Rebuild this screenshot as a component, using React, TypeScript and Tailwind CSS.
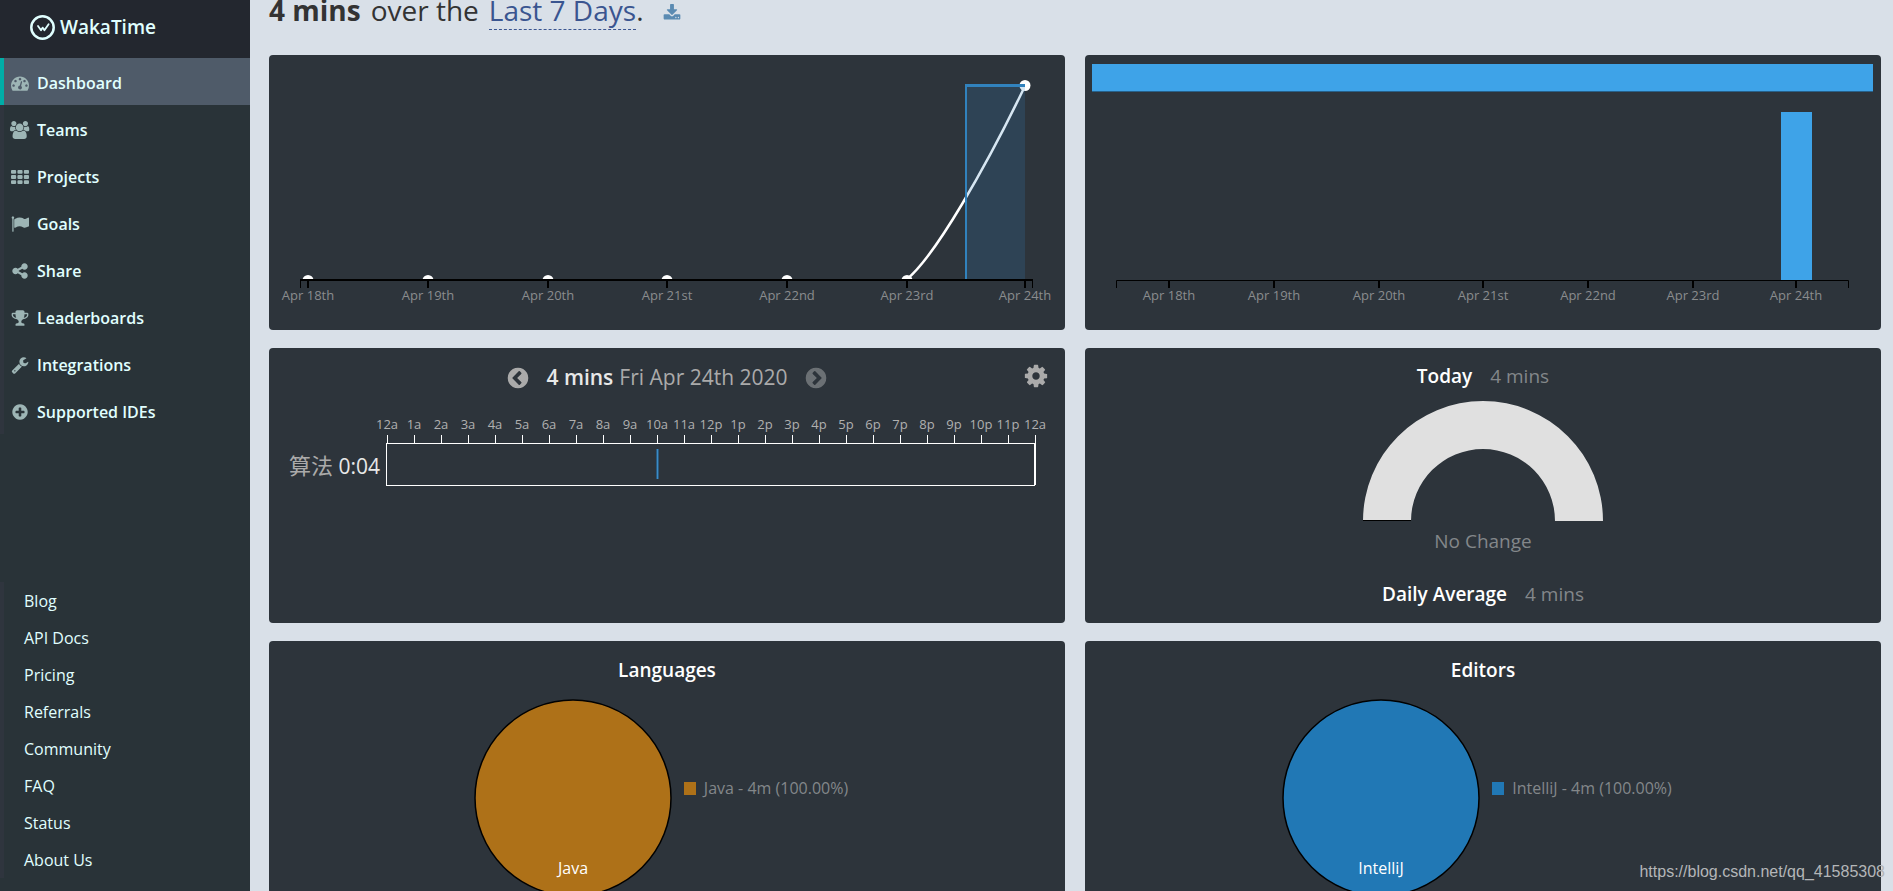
import React from 'react';

type IconDef = { width?: number; path: string };

const icons: Record<string, IconDef> = {
  dashboard: {
    path: 'M384 1152q0-53-37.5-90.5t-90.5-37.5-90.5 37.5-37.5 90.5 37.5 90.5 90.5 37.5 90.5-37.5 37.5-90.5zm192-448q0-53-37.5-90.5t-90.5-37.5-90.5 37.5-37.5 90.5 37.5 90.5 90.5 37.5 90.5-37.5 37.5-90.5zm428 481l101-382q6-26-7.5-48.5t-38.5-29.5-48 6.5-30 39.5l-101 382q-60 5-107 43.5t-63 98.5q-20 77 20 146t117 89 146-20 89-117q16-60-6-117t-72-91zm660-33q0-53-37.5-90.5t-90.5-37.5-90.5 37.5-37.5 90.5 37.5 90.5 90.5 37.5 90.5-37.5 37.5-90.5zm-640-640q0-53-37.5-90.5t-90.5-37.5-90.5 37.5-37.5 90.5 37.5 90.5 90.5 37.5 90.5-37.5 37.5-90.5zm448 192q0-53-37.5-90.5t-90.5-37.5-90.5 37.5-37.5 90.5 37.5 90.5 90.5 37.5 90.5-37.5 37.5-90.5zm320 448q0 261-141 483-19 29-54 29h-1402q-35 0-54-29-141-221-141-483 0-182 71-348t191-286 286-191 348-71 348 71 286 191 191 286 71 348z',
  },
  users: {
    width: 1920,
    path: 'M593 896q-162 5-265 128h-134q-82 0-138-40.5t-56-118.5q0-353 124-353 6 0 43.5 21t97.5 42.5 119 21.5q67 0 133-23-5 37-5 66 0 139 81 256zm1071 637q0 120-73 189.5t-194 69.5h-874q-121 0-194-69.5t-73-189.5q0-53 3.5-103.5t14-109 26.5-108.5 43-97.5 62-81 85.5-53.5 111.5-20q10 0 43 21.5t73 48 107 48 135 21.5 135-21.5 107-48 73-48 43-21.5q61 0 111.5 20t85.5 53.5 62 81 43 97.5 26.5 108.5 14 109 3.5 103.5zm-1024-1277q0 106-75 181t-181 75-181-75-75-181 75-181 181-75 181 75 75 181zm704 384q0 159-112.5 271.5t-271.5 112.5-271.5-112.5-112.5-271.5 112.5-271.5 271.5-112.5 271.5 112.5 112.5 271.5zm576 225q0 78-56 118.5t-138 40.5h-134q-103-123-265-128 81-117 81-256 0-29-5-66 66 23 133 23 59 0 119-21.5t97.5-42.5 43.5-21q124 0 124 353zm-128-609q0 106-75 181t-181 75-181-75-75-181 75-181 181-75 181 75 75 181z',
  },
  grid: {
    path: 'M96 192h320q96 0 96 96v192q0 96-96 96h-320q-96 0-96-96v-192q0-96 96-96zm640 0h320q96 0 96 96v192q0 96-96 96h-320q-96 0-96-96v-192q0-96 96-96zm640 0h320q96 0 96 96v192q0 96-96 96h-320q-96 0-96-96v-192q0-96 96-96zM96 704h320q96 0 96 96v192q0 96-96 96h-320q-96 0-96-96v-192q0-96 96-96zm640 0h320q96 0 96 96v192q0 96-96 96h-320q-96 0-96-96v-192q0-96 96-96zm640 0h320q96 0 96 96v192q0 96-96 96h-320q-96 0-96-96v-192q0-96 96-96zM96 1216h320q96 0 96 96v192q0 96-96 96h-320q-96 0-96-96v-192q0-96 96-96zm640 0h320q96 0 96 96v192q0 96-96 96h-320q-96 0-96-96v-192q0-96 96-96zm640 0h320q96 0 96 96v192q0 96-96 96h-320q-96 0-96-96v-192q0-96 96-96z',
  },
  flag: {
    path: 'M320 256q0 72-64 110v1266q0 13-9.5 22.5t-22.5 9.5h-64q-13 0-22.5-9.5t-9.5-22.5v-1266q-64-38-64-110 0-53 37.5-90.5t90.5-37.5 90.5 37.5 37.5 90.5zm1472 64v763q0 25-12.5 38.5t-39.5 27.5q-215 116-369 116-61 0-123.5-22t-108.5-48-115.5-48-142.5-22q-192 0-464 146-17 9-33 9-26 0-45-19t-19-45v-742q0-32 31-55 21-14 79-43 236-120 421-120 107 0 200 29t219 88q38 19 88 19 54 0 117.5-21t110-47 88-47 54.5-21q26 0 45 19t19 45z',
  },
  share: {
    path: 'M1344 1024q133 0 226.5 93.5t93.5 226.5-93.5 226.5-226.5 93.5-226.5-93.5-93.5-226.5q0-12 2-34l-360-180q-92 86-218 86-133 0-226.5-93.5t-93.5-226.5 93.5-226.5 226.5-93.5q126 0 218 86l360-180q-2-22-2-34 0-133 93.5-226.5t226.5-93.5 226.5 93.5 93.5 226.5-93.5 226.5-226.5 93.5q-126 0-218-86l-360 180q2 22 2 34t-2 34l360 180q92-86 218-86z',
  },
  trophy: {
    path: 'M522 883q-74-162-74-371h-256v96q0 78 94.5 162t235.5 113zm1078-275v-96h-256q0 209-74 371 141-29 235.5-113t94.5-162zm128-128v128q0 71-41.5 143t-112 130-173 97.5-215.5 44.5q-42 54-95 95-38 34-52.5 72.5t-14.5 89.5q0 54 30.5 91t97.5 37q75 0 133.5 45.5t58.5 114.5v64q0 14-9 23t-23 9h-832q-14 0-23-9t-9-23v-64q0-69 58.5-114.5t133.5-45.5q67 0 97.5-37t30.5-91q0-51-14.5-89.5t-52.5-72.5q-53-41-95-95-113-5-215.5-44.5t-173-97.5-112-130-41.5-143v-128q0-40 28-68t68-28h288v-96q0-66 47-113t113-47h576q66 0 113 47t47 113v96h288q40 0 68 28t28 68z',
  },
  wrench: {
    path: 'M448 1472q0-26-19-45t-45-19-45 19-19 45 19 45 45 19 45-19 19-45zm644-420l-682 682q-37 37-90 37-52 0-91-37l-106-108q-38-36-38-90 0-53 38-91l681-681q39 98 114.5 173.5t173.5 114.5zm634-435q0 39-23 106-47 134-164.5 217.5t-258.5 83.5q-185 0-316.5-131.5t-131.5-316.5 131.5-316.5 316.5-131.5q58 0 121.5 16.5t107.5 46.5q16 11 16 28t-16 28l-293 169v224l193 107q5-3 79-48.5t135.5-81 70.5-35.5q15 0 23.5 10t8.5 25z',
  },
  plus: {
    path: 'M1344 960v-128q0-26-19-45t-45-19h-256v-256q0-26-19-45t-45-19h-128q-26 0-45 19t-19 45v256h-256q-26 0-45 19t-19 45v128q0 26 19 45t45 19h256v256q0 26 19 45t45 19h128q26 0 45-19t19-45v-256h256q26 0 45-19t19-45zm320-64q0 209-103 385.5t-279.5 279.5-385.5 103-385.5-103-279.5-279.5-103-385.5 103-385.5 279.5-279.5 385.5-103 385.5 103 279.5 279.5 103 385.5z',
  },
  left: {
    path: 'M1037 1395l102-102q19-19 19-45t-19-45l-307-307 307-307q19-19 19-45t-19-45l-102-102q-19-19-45-19t-45 19l-454 454q-19 19-19 45t19 45l454 454q19 19 45 19t45-19zm627-499q0 209-103 385.5t-279.5 279.5-385.5 103-385.5-103-279.5-279.5-103-385.5 103-385.5 279.5-279.5 385.5-103 385.5 103 279.5 279.5 103 385.5z',
  },
  right: {
    path: 'M845 1395l454-454q19-19 19-45t-19-45l-454-454q-19-19-45-19t-45 19l-102 102q-19 19-19 45t19 45l307 307-307 307q-19 19-19 45t19 45l102 102q19 19 45 19t45-19zm819-499q0 209-103 385.5t-279.5 279.5-385.5 103-385.5-103-279.5-279.5-103-385.5 103-385.5 279.5-279.5 385.5-103 385.5 103 279.5 279.5 103 385.5z',
  },
  cog: {
    path: 'M1152 896q0-106-75-181t-181-75-181 75-75 181 75 181 181 75 181-75 75-181zm512-109v222q0 12-8 23t-20 13l-185 28q-19 54-39 91 35 50 107 138 10 12 10 25t-9 23q-27 37-99 108t-94 71q-12 0-26-9l-138-108q-44 23-91 38-16 136-29 186-7 28-36 28h-222q-14 0-24.5-8.5t-11.5-21.5l-28-184q-49-16-90-37l-141 107q-10 9-25 9-14 0-25-11-126-114-165-168-7-10-7-23 0-12 8-23 15-21 51-66.5t54-70.5q-27-50-41-99l-183-27q-13-2-21-12.5t-8-23.5v-222q0-12 8-23t19-13l186-28q14-46 39-92-40-57-107-138-10-12-10-24 0-10 9-23 26-36 98.5-107.5t94.5-71.5q13 0 26 10l138 107q44-23 91-38 16-136 29-186 7-28 36-28h222q14 0 24.5 8.5t11.5 21.5l28 184q49 16 90 37l142-107q9-9 24-9 13 0 25 10 129 119 165 170 7 8 7 22 0 12-8 23-15 21-51 66.5t-54 70.5q26 50 41 98l183 28q13 2 21 12.5t8 23.5z',
  },
  download: {
    path: 'M1344 1344q0-26-19-45t-45-19-45 19-19 45 19 45 45 19 45-19 19-45zm256 0q0-26-19-45t-45-19-45 19-19 45 19 45 45 19 45-19 19-45zm128-224v320q0 40-28 68t-68 28h-1472q-40 0-68-28t-28-68v-320q0-40 28-68t68-28h465l135 136q58 56 136 56t136-56l136-136h464q40 0 68 28t28 68zm-325-569q17 41-14 70l-448 448q-18 19-45 19t-45-19l-448-448q-31-29-14-70 17-39 59-39h256v-448q0-26 19-45t45-19h256q26 0 45 19t19 45v448h256q42 0 59 39z',
  },
};

const navItems = [
  { name: 'Dashboard', icon: 'dashboard', active: true },
  { name: 'Teams', icon: 'users' },
  { name: 'Projects', icon: 'grid' },
  { name: 'Goals', icon: 'flag' },
  { name: 'Share', icon: 'share' },
  { name: 'Leaderboards', icon: 'trophy' },
  { name: 'Integrations', icon: 'wrench' },
  { name: 'Supported IDEs', icon: 'plus' },
];

const footerLinks = [
  'Blog',
  'API Docs',
  'Pricing',
  'Referrals',
  'Community',
  'FAQ',
  'Status',
  'About Us',
];

const days = [
  { label: 'Apr 18th', line: 39, bar: 84 },
  { label: 'Apr 19th', line: 159, bar: 189 },
  { label: 'Apr 20th', line: 279, bar: 294 },
  { label: 'Apr 21st', line: 398, bar: 398 },
  { label: 'Apr 22nd', line: 518, bar: 503 },
  { label: 'Apr 23rd', line: 638, bar: 608 },
  { label: 'Apr 24th', line: 756, bar: 711 },
];

const hours = [
  '12a', '1a', '2a', '3a', '4a', '5a', '6a', '7a', '8a', '9a', '10a', '11a',
  '12p', '1p', '2p', '3p', '4p', '5p', '6p', '7p', '8p', '9p', '10p', '11p', '12a',
];

function Icon({ name, className }: { name: string; className: string }) {
  const icon = icons[name];
  return (
    <svg
      viewBox={`0 0 ${icon.width ?? 1792} 1792`}
      className={className}
      fill="currentColor"
      aria-hidden="true"
    >
      <path d={icon.path} />
    </svg>
  );
}

function Card({ children }: { children: React.ReactNode }) {
  return (
    <section className="min-h-[275px] overflow-hidden rounded bg-[#2d343b]">
      {children}
    </section>
  );
}

function Sidebar() {
  return (
    <aside className="flex w-[250px] shrink-0 flex-col bg-[#293338] text-[#e0ffff]">
      <a
        href="#"
        className="flex h-[58px] shrink-0 items-center gap-[5px] bg-[#23272f] pb-1 pl-[30px] text-[19px] font-semibold"
      >
        <svg viewBox="0 0 25 25" className="size-[25px]" fill="none" stroke="currentColor">
          <circle cx="12.5" cy="12.5" r="11.2" strokeWidth="2.5" />
          <path
            d="M8 11l3 4.2 1.6-2.6 1.8 2.6 4.2-6"
            strokeWidth="1.8"
            strokeLinecap="round"
            strokeLinejoin="round"
          />
        </svg>
        WakaTime
      </a>
      <nav>
        {navItems.map((item) => (
          <a
            key={item.name}
            href="#"
            className={`flex h-[47px] items-center gap-[7px] border-l-4 pt-0.5 pl-1.5 text-base font-semibold ${
              item.active ? 'border-[#00ada7] bg-[#4f5b69]' : 'border-[#2f353e]'
            }`}
          >
            <span className="flex w-5 justify-center text-[#9db5b5]">
              <Icon name={item.icon} className="h-[18px]" />
            </span>
            {item.name}
          </a>
        ))}
      </nav>
      <nav className="mt-auto mb-[13px]">
        {footerLinks.map((link) => (
          <a
            key={link}
            href="#"
            className="flex h-[37px] items-center border-l-4 border-[#2f353e] pl-5 text-base"
          >
            {link}
          </a>
        ))}
      </nav>
    </aside>
  );
}

function ActivityChart() {
  return (
    <svg viewBox="0 0 796 275" className="block w-full">
      <defs>
        <clipPath id="plot">
          <rect x="0" y="0" width="796" height="225" />
        </clipPath>
      </defs>
      <g clipPath="url(#plot)">
        <path d="M637 225C666 202 718 110 756 31" fill="none" stroke="#fff" strokeWidth="2.5" />
        {days.map((day, i) => (
          <circle
            key={day.label}
            cx={day.line}
            cy={i === days.length - 1 ? 30.5 : 225.5}
            r="5.5"
            fill="#fff"
          />
        ))}
        <rect x="697" y="30" width="59" height="195" fill="#3182bd" fillOpacity="0.2" />
        <rect x="696" y="29" width="2" height="196" fill="#3182bd" />
        <rect x="696" y="29" width="60" height="3" fill="#3182bd" />
      </g>
      <path d="M31.5 233v-8M763.5 233v-8" stroke="#000" />
      <path d="M31 225h733" stroke="#000" strokeWidth="2" />
      {days.map((day) => (
        <g key={day.label}>
          <path d={`M${day.line} 225v8`} stroke="#000" strokeWidth="2" />
          <text x={day.line} y="245" textAnchor="middle" className="fill-[#8a8c8e] text-[13px]">
            {day.label}
          </text>
        </g>
      ))}
    </svg>
  );
}

function ProjectsChart() {
  return (
    <svg viewBox="0 0 796 275" className="block w-full">
      <rect x="7" y="9" width="781" height="27" fill="#3ea3e8" />
      <rect x="7" y="36" width="781" height="1" fill="#27618b" />
      <rect x="696" y="57" width="31" height="168" fill="#3ea3e8" />
      <path d="M31.5 233v-7.5h732v7.5" fill="none" stroke="#000" />
      {days.map((day) => (
        <g key={day.label}>
          <path d={`M${day.bar} 226v7`} stroke="#000" strokeWidth="2" />
          <text x={day.bar} y="245" textAnchor="middle" className="fill-[#8a8c8e] text-[13px]">
            {day.label}
          </text>
        </g>
      ))}
    </svg>
  );
}

function Timeline() {
  return (
    <>
      <div className="grid h-16 grid-cols-[1fr_auto_1fr] items-center px-4 pb-1 text-[21px]">
        <div />
        <div className="flex items-center">
          <button type="button" aria-label="Previous day" className="mr-4 text-[#aaaaaa]">
            <Icon name="left" className="size-6" />
          </button>
          <span className="font-semibold text-[#e8e8e8]">4 mins</span>
          <span className="ml-1.5 text-[#aaaaaa]">Fri Apr 24th 2020</span>
          <button type="button" aria-label="Next day" className="ml-4 text-[#6b7074]">
            <Icon name="right" className="size-6" />
          </button>
        </div>
        <button type="button" aria-label="Settings" className="justify-self-end pb-1 text-[#aaaaaa]">
          <Icon name="cog" className="size-[26px]" />
        </button>
      </div>
      <svg viewBox="0 64 796 211" className="block w-full">
        <text x="111" y="126" textAnchor="end" className="fill-[#e8e8e8] text-[21px]">
          <tspan className="fill-[#aaaaaa] text-[22px]">算法</tspan> 0:04
        </text>
        <clipPath id="hours">
          <rect x="0" y="64" width="777" height="30" />
        </clipPath>
        <g clipPath="url(#hours)">
          {hours.map((hour, i) => (
            <text
              key={i}
              x={118 + i * 27}
              y="81"
              textAnchor="middle"
              className="fill-[#b0b0b0] text-[13px]"
            >
              {hour}
            </text>
          ))}
        </g>
        {hours.map((hour, i) => (
          <path key={i} d={`M${118.5 + i * 27} 87v8`} stroke="#fff" />
        ))}
        <rect x="117.5" y="95.5" width="648" height="42" fill="none" stroke="#fff" />
        <path d="M766.5 95v42" stroke="#fff" />
        <rect x="387" y="101" width="3" height="30" fill="#285a80" />
        <rect x="388" y="101" width="1" height="30" fill="#3d8cc6" />
      </svg>
    </>
  );
}

function Stat({ label, value }: { label: string; value: string }) {
  return (
    <p className="text-[19px] leading-6">
      <strong className="font-semibold text-white">{label}</strong>
      <span className="ml-[18px] text-[#83878a]">{value}</span>
    </p>
  );
}

function TodayGauge() {
  return (
    <div className="flex flex-col items-center pt-4">
      <Stat label="Today" value="4 mins" />
      <svg viewBox="0 0 240 121" className="mt-[13px] w-60">
        <path d="M0 120a120 120 0 0 1 240 0h-48a72 72 0 0 0-144 0z" fill="#e0e0e0" />
        <path d="M0 119.5h48" stroke="#000" />
      </svg>
      <p className="mt-[7px] text-[19px] leading-6 text-[#83878a]">No Change</p>
      <div className="mt-[29px]">
        <Stat label="Daily Average" value="4 mins" />
      </div>
    </div>
  );
}

function PieCard({ title, name, color }: { title: string; name: string; color: string }) {
  return (
    <Card>
      <h2 className="pt-[17px] text-center text-[19px] leading-6 font-semibold text-white">
        {title}
      </h2>
      <div className="mt-[17px] flex justify-center pr-3">
        <svg viewBox="0 0 198 198" className="size-[198px]">
          <circle cx="99" cy="99" r="98" fill={color} stroke="#000" strokeWidth="1.5" />
          <text x="99" y="175" textAnchor="middle" className="fill-white text-base font-medium">
            {name}
          </text>
        </svg>
        <div className="mt-[79px] ml-3 flex h-5 items-center gap-2 text-base text-[#83878a]">
          <span className="h-[13px] w-3" style={{ backgroundColor: color }} />
          {name} - 4m (100.00%)
        </div>
      </div>
    </Card>
  );
}

export default function App() {
  return (
    <div className="relative flex h-screen overflow-hidden bg-[#d9e0e8] font-['Open_Sans','Noto_Sans_CJK_SC',sans-serif]">
      <Sidebar />
      <main className="min-w-0 flex-1 pr-3 pl-[19px]">
        <h1 className="-mt-2.5 mb-[25px] flex h-10 items-center text-[28px] text-[#333333]">
          <strong className="font-bold">4 mins</strong>
          <span className="ml-2.5">over the</span>
          <a
            href="#"
            className="ml-2.5 border-b border-dashed border-[#3a5590] leading-[38px] text-[#3a5590]"
          >
            Last 7 Days
          </a>
          .
          <button type="button" aria-label="Download" className="mt-1.5 ml-5 text-[#5b8bb2]">
            <Icon name="download" className="size-[18px]" />
          </button>
        </h1>
        <div className="grid grid-cols-2 gap-x-5 gap-y-[18px]">
          <Card>
            <ActivityChart />
          </Card>
          <Card>
            <ProjectsChart />
          </Card>
          <Card>
            <Timeline />
          </Card>
          <Card>
            <TodayGauge />
          </Card>
          <PieCard title="Languages" name="Java" color="#ae7118" />
          <PieCard title="Editors" name="IntelliJ" color="#2178b5" />
        </div>
      </main>
      <p className="absolute right-2 bottom-[7px] font-['Liberation_Sans',sans-serif] text-base text-[#b4b6b8]">
        https://blog.csdn.net/qq_41585308
      </p>
    </div>
  );
}
